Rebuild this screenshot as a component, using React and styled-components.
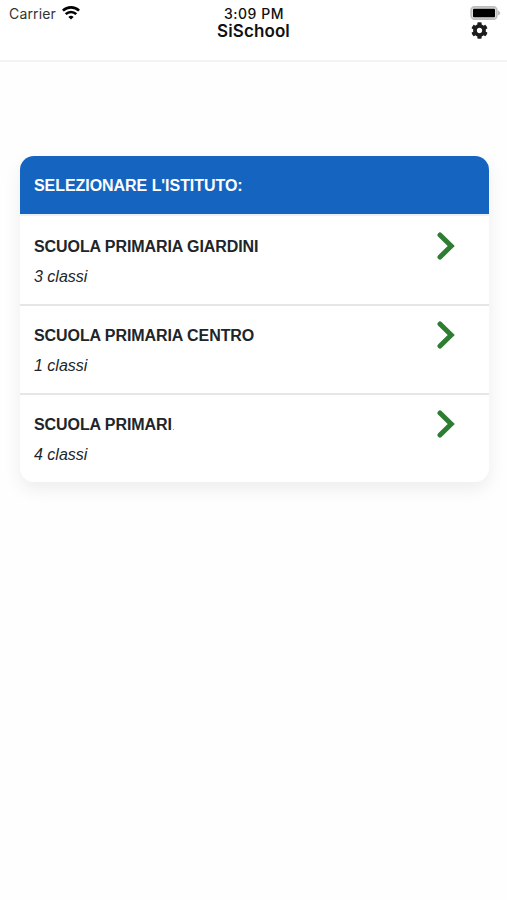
import React from 'react';
import styled, { createGlobalStyle } from 'styled-components';
import { FaCog } from 'react-icons/fa';

const schools = [
  { name: 'SCUOLA PRIMARIA GIARDINI', classes: 3 },
  { name: 'SCUOLA PRIMARIA CENTRO', classes: 1 },
  { name: 'SCUOLA PRIMARI', classes: 4, cut: true },
];

const App = () => {
  return (
    <Page>
      <GlobalStyle />
      <Header>
        <StatusBar>
          <Carrier>
            <span>Carrier</span>
            <WifiIcon />
          </Carrier>
          <Time>3:09 PM</Time>
          <BatteryIcon />
        </StatusBar>
        <NavBar>
          <Title>SiSchool</Title>
          <SettingsButton aria-label="Impostazioni">
            <FaCog size={17} />
          </SettingsButton>
        </NavBar>
      </Header>
      <Card>
        <CardTitle>SELEZIONARE L'ISTITUTO:</CardTitle>
        {schools.map((school) => (
          <Row key={school.name}>
            <div>
              <SchoolName>
                {school.name}
                {school.cut && <Dot />}
              </SchoolName>
              <Classes>{school.classes} classi</Classes>
            </div>
            <Chevron viewBox="0 0 18 28">
              <path d="M3 3 L14.2 14 L3 25" />
            </Chevron>
          </Row>
        ))}
      </Card>
    </Page>
  );
}

const WifiIcon = () => (
  <svg width="18" height="14" viewBox="0 0 18 14" fill="none" stroke="#000" strokeWidth="2.6">
    <path d="M0.9 4.7 C5.4 0.2 12.6 0.2 17.1 4.7" />
    <path d="M3.7 8.1 C6.7 5.2 11.3 5.2 14.3 8.1" />
    <path d="M9 13.6 L6.4 10.9 C7.9 9.5 10.1 9.5 11.6 10.9 Z" fill="#000" stroke="none" />
  </svg>
);

const BatteryIcon = () => (
  <svg width="31" height="14" viewBox="0 0 31 14">
    <rect x="1.1" y="0.9" width="25.8" height="12.2" rx="3.4" fill="#ddd" stroke="#bdbdbd" strokeWidth="1.6" />
    <rect x="3" y="2.7" width="22" height="8.6" rx="1" fill="#000" />
    <path d="M28 4.7 C31 5.7 31 8.3 28 9.3 Z" fill="#bdbdbd" />
  </svg>
);

export default App;

const GlobalStyle = createGlobalStyle`
  * {
    box-sizing: border-box;
  }

  body {
    margin: 0;
    background: #fefefe;
  }
`;

const Page = styled.div`
  min-height: 900px;
  color: #212529;
  font-family: 'Liberation Sans', Arial, sans-serif;
`;

const Header = styled.header`
  height: 62px;
  background: #fff;
  border-bottom: 2px solid #f4f4f4;
  color: #111;
`;

const StatusBar = styled.div`
  display: grid;
  grid-template-columns: 1fr auto 1fr;
  align-items: center;
  height: 22px;
  padding: 5px 6px 0 9px;
  font-family: Inter, sans-serif;
  font-size: 14px;
  line-height: 17px;

  > svg {
    justify-self: end;
    margin-top: -1px;
  }
`;

const Carrier = styled.div`
  display: flex;
  align-items: center;
  gap: 6px;
  color: #333;
  letter-spacing: 0.15px;

  svg {
    margin-top: -1px;
  }
`;

const Time = styled.span`
  margin-left: -2px;
  font-weight: 500;
  letter-spacing: 0.55px;
`;

const NavBar = styled.div`
  display: grid;
  grid-template-columns: 1fr auto 1fr;
  align-items: center;
  height: 18px;
  padding: 0 19px;
`;

const Title = styled.h1`
  grid-column: 2;
  margin: 0;
  font-family: Inter, sans-serif;
  font-size: 17px;
  font-weight: 600;
  letter-spacing: 0.1px;
  line-height: 18px;
`;

const SettingsButton = styled.button`
  display: flex;
  justify-self: end;
  margin-top: -2px;
  padding: 0;
  border: none;
  background: none;
  color: #1c1c1c;
`;

const Card = styled.main`
  margin: 93.5px 18.5px 0 19.5px;
  border-radius: 14px;
  background: #fff;
  box-shadow: 0 7px 18px rgba(0, 0, 0, 0.07);
  overflow: hidden;
`;

const CardTitle = styled.h2`
  height: 58.5px;
  margin: 0;
  padding: 0 14.5px;
  background: #1565c0;
  color: #fff;
  font-size: 16px;
  letter-spacing: -0.05px;
  line-height: 60px;
`;

const Row = styled.div`
  display: flex;
  justify-content: space-between;
  height: 89px;
  padding: 15px 33.5px 0 14.5px;
  border-top: 2px solid #e5e6e7;

  h2 + & {
    height: 90px;
    padding-top: 16px;
    border-color: #edf1f5;
  }
`;

const SchoolName = styled.div`
  font-size: 16px;
  font-weight: bold;
  letter-spacing: -0.08px;
  line-height: 29.5px;
`;

const Dot = styled.span`
  display: inline-block;
  width: 1px;
  height: 1px;
  margin-left: 1px;
  background: #aaa;
`;

const Classes = styled.div`
  font-size: 16px;
  font-style: italic;
  line-height: 29.5px;
`;

const Chevron = styled.svg`
  width: 18px;
  height: 28px;
  fill: none;
  stroke: #2e7d32;
  stroke-width: 5;
  stroke-linecap: round;
`;
